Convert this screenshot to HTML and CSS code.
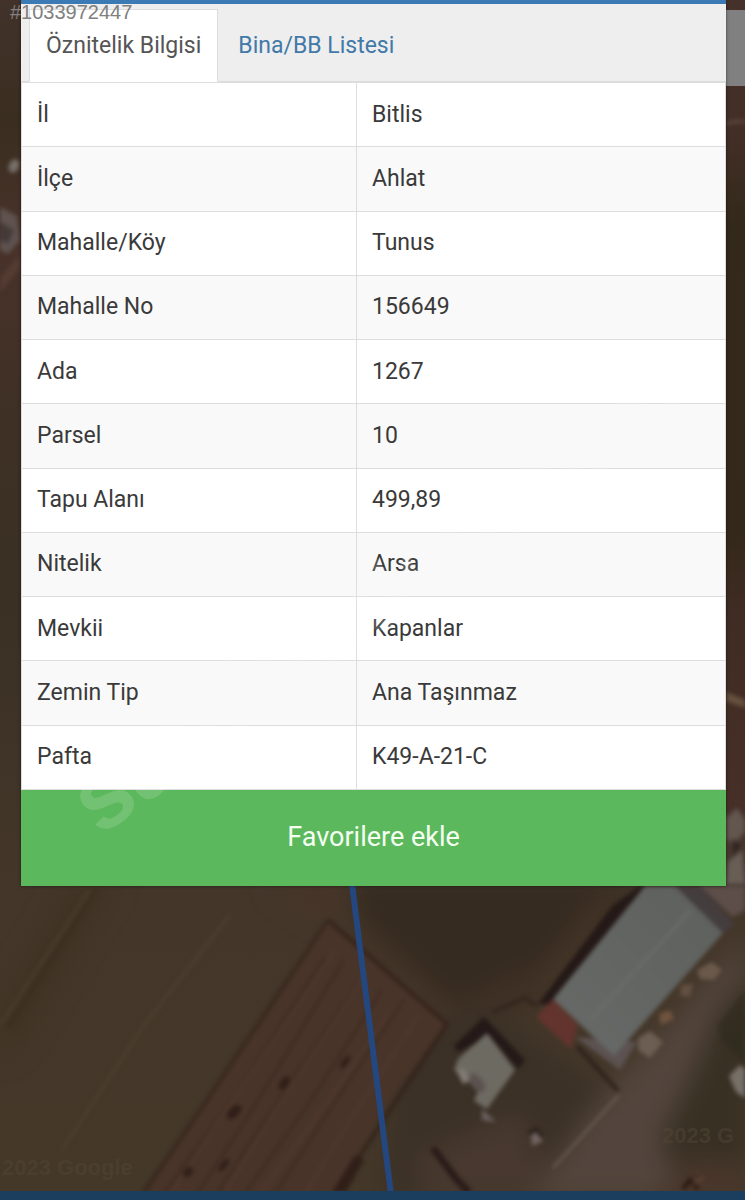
FILE: index.html
```html
<!DOCTYPE html>
<html lang="tr">
<head>
<meta charset="utf-8">
<meta name="viewport" content="width=device-width, initial-scale=1">
<title>Parsel Bilgisi</title>
<link rel="stylesheet" href="styles.css">
</head>
<body>
<div class="page">
  <svg class="map" viewBox="0 0 745 1200" preserveAspectRatio="xMidYMin slice" aria-hidden="true">
    <defs>
      <filter id="soft" color-interpolation-filters="sRGB" x="-20%" y="-20%" width="140%" height="140%"><feGaussianBlur stdDeviation="2"/></filter>
      <filter id="haze" color-interpolation-filters="sRGB" x="-50%" y="-50%" width="200%" height="200%"><feGaussianBlur stdDeviation="13"/></filter>
      <linearGradient id="left" x1="0" y1="0" x2="0" y2="1">
        <stop offset="0" stop-color="#42322a"/><stop offset=".1" stop-color="#3a2e20"/>
        <stop offset=".2" stop-color="#49322a"/><stop offset=".35" stop-color="#3e3024"/>
        <stop offset=".5" stop-color="#3a3024"/><stop offset=".75" stop-color="#44372a"/>
        <stop offset="1" stop-color="#443829"/>
      </linearGradient>
      <linearGradient id="right" x1="0" y1="0" x2="0" y2="1">
        <stop offset="0" stop-color="#46312a"/><stop offset=".15" stop-color="#432e26"/>
        <stop offset=".25" stop-color="#33291b"/><stop offset=".6" stop-color="#34281a"/>
        <stop offset=".7" stop-color="#412c24"/><stop offset=".9" stop-color="#452f27"/>
        <stop offset="1" stop-color="#4a3d35"/>
      </linearGradient>
      <linearGradient id="roof" x1="0" y1="1" x2="1" y2="0">
        <stop offset="0" stop-color="#676a68"/><stop offset="1" stop-color="#5e605d"/>
      </linearGradient>
    </defs>
    <rect width="745" height="1200" fill="url(#left)"/>
    <rect x="700" width="45" height="890" fill="url(#right)"/>

    <g filter="url(#soft)">
      <ellipse cx="14" cy="166" rx="5" ry="7" fill="#77716a" transform="rotate(25 14 166)"/>
      <path d="M0 207L17 216L20 240L8 254L0 250Z" fill="#5f5350"/>
      <path d="M0 222L14 230L8 244L0 240Z" fill="#443b39"/>
      <path d="M0 278L20 254V268L0 293Z" fill="#543c32"/>
      <path d="M726 124Q736 120 745 122" fill="none" stroke="#5a443a" stroke-width="4"/>
      <path d="M726 692L745 700V708L726 701Z" fill="#67523f"/>
      <path d="M726 818L737 808L745 820V832L733 845L726 838Z" fill="#62564f"/>
      <path d="M728 862L742 850L745 884H726Z" fill="#685e56"/>
      <path d="M732 838L741 846L734 856Z" fill="#302521"/>
    </g>

    <g filter="url(#haze)">
      <path d="M350 880H640L535 1000L455 1025L365 940Z" fill="#352b20"/>
      <path d="M355 925L450 1015L545 975L610 895" fill="none" stroke="#453327" stroke-width="17"/>
      <path d="M400 1040L480 1000L620 1100L550 1200H380Z" fill="#3b3126"/>
      <path d="M410 1160L520 1110L560 1200H430Z" fill="#48382f"/>
      <path d="M745 940L680 1015L590 1110L530 1200H665L695 1080L745 1000Z" fill="#53453d"/>
      <path d="M745 975L715 1020L690 1080L660 1140L680 1180L745 1170Z" fill="#383023"/>
      <path d="M655 1200L690 1160L745 1165V1200Z" fill="#4b372c"/>
      <path d="M75 880L115 880L20 1040L0 1060V1010Z" fill="#403223"/>
      <path d="M270 885H350L325 920Z" fill="#493329"/>
    </g>

    <g filter="url(#soft)">
      <path d="M90 890L0 1025" fill="none" stroke="#4a3d2d" stroke-width="3"/>
      <path d="M96 890L8 1027" fill="none" stroke="#3c2e21" stroke-width="5"/>
      <path d="M230 915L142 1028L62 1150" fill="none" stroke="#4d3f2f" stroke-width="3"/>
      <path d="M328 920L447 1024L390 1098L335 1192H142L207 1099Z" fill="#493429"/>
      <path d="M328 920L447 1024L336 1192" fill="none" stroke="#35231b" stroke-width="4"/>
      <path d="M328 920L207 1100L144 1192" fill="none" stroke="#38281e" stroke-width="4"/>
      <g fill="none" stroke="#402c23" stroke-width="3">
        <path d="M325 957L238 1090L165 1192"/><path d="M344 960L252 1110L198 1192"/>
        <path d="M358 983L285 1090L218 1192"/><path d="M382 990L311 1100L246 1192"/>
        <path d="M404 1000L333 1105L276 1192"/>
      </g>
      <g fill="none" stroke="#50392e" stroke-width="3">
        <path d="M335 950L220 1118L172 1192"/><path d="M367 972L275 1110L225 1192"/>
        <path d="M391 1011L316 1118L261 1192"/><path d="M419 1015L350 1120L306 1192"/>
      </g>
      <g fill="#301f18">
        <ellipse cx="284" cy="1083" rx="4" ry="8" transform="rotate(35 284 1083)"/>
        <ellipse cx="234" cy="1112" rx="5" ry="9" transform="rotate(45 234 1112)"/>
        <ellipse cx="345" cy="1062" rx="3" ry="8" transform="rotate(35 345 1062)"/>
        <ellipse cx="224" cy="1165" rx="3" ry="8" transform="rotate(40 224 1165)"/>
        <ellipse cx="188" cy="1172" rx="4" ry="6" transform="rotate(40 188 1172)"/>
        <path d="M332 1192L355 1155L364 1160L346 1192Z"/>
      </g>

      <path d="M640 886L612 906L538 1004L552 1004L648 886Z" fill="#241917"/>
      <path d="M676 886H700L735 924L722 934Z" fill="#443d3e"/>
      <path d="M700 886L733 917L745 910V886Z" fill="#5d4e49"/>
      <path d="M575 1037L620 1070L637 1042Z" fill="#5c5251"/>
      <path d="M645 886H675L723 933L614 1056L553 999Z" fill="url(#roof)"/>
      <path d="M691 910L590 1020" stroke="#6c6f6d" stroke-width="2"/>
      <path d="M553 999L578 1025L571 1049L536 1017Z" fill="#63342e"/>
      <path d="M484 1017L525 1060L518 1069L490 1036L458 1052L454 1046Z" fill="#241918"/>
      <path d="M487 1033L515 1070L487 1109L474 1101L479 1088L454 1070L458 1059Z" fill="#6d6a62"/>
      <ellipse cx="477" cy="1083" rx="11" ry="6" fill="#5c5250" transform="rotate(50 477 1083)"/>
      <path d="M456 1070L465 1069L470 1081L463 1084Z" fill="#817a74"/>
      <path d="M482 1109L496 1122L482 1120Z" fill="#6b6060"/>
      <path d="M493 1012L525 998L537 1006" fill="none" stroke="#2f221b" stroke-width="3"/>
      <path d="M577 1046L618 1091" stroke="#2c201a" stroke-width="4"/>
      <path d="M619 1095L553 1168" stroke="#6d6156" stroke-width="2"/>
      <path d="M433 1148L457 1180L469 1192" fill="none" stroke="#291b18" stroke-width="7"/>
      <path d="M531 1136L537 1131L543 1141L532 1146Z" fill="#6f6460"/>
      <path d="M529 1133L536 1129L542 1137" fill="none" stroke="#251b17" stroke-width="3"/>
      <path d="M697 970L712 962L722 970L714 980L700 979Z" fill="#6b5a4b"/>
      <path d="M681 985L693 984L690 997L680 996Z" fill="#635042"/>
      <path d="M659 1014L670 1010L674 1019L661 1025Z" fill="#70543f"/>
      <path d="M638 1038L650 1031L663 1042L650 1058L638 1050Z" fill="#6c5e52"/>
      <path d="M721 1040L718 1025L745 990V1065Z" fill="#2b281c" opacity=".55"/>
      <path d="M729 1076L740 1065L745 1069V1098L736 1092Z" fill="#777069"/>
      <path d="M683 1189L690 1180L698 1189" fill="none" stroke="#29170f" stroke-width="4"/>
      <path d="M693 1184L704 1177" stroke="#604035" stroke-width="3"/>
    </g>
    <path d="M352 884L391 1194" stroke="#23477e" stroke-width="6"/>
    <text class="map-credit" x="2" y="1175">2023 Google</text>
    <text class="map-credit" x="662" y="1143">2023 G</text>
  </svg>
  <div class="map-control"></div>
  <div class="map-footer"></div>

  <main class="dialog">
    <nav class="tabs">
      <a class="tab active" href="#oznitelik" aria-current="page">Öznitelik Bilgisi</a>
      <a class="tab" href="#bina">Bina/BB Listesi</a>
    </nav>
    <table class="details" id="oznitelik">
      <tbody>
        <tr><th scope="row">İl</th><td>Bitlis</td></tr>
        <tr><th scope="row">İlçe</th><td>Ahlat</td></tr>
        <tr><th scope="row">Mahalle/Köy</th><td>Tunus</td></tr>
        <tr><th scope="row">Mahalle No</th><td>156649</td></tr>
        <tr><th scope="row">Ada</th><td>1267</td></tr>
        <tr><th scope="row">Parsel</th><td>10</td></tr>
        <tr><th scope="row">Tapu Alanı</th><td>499,89</td></tr>
        <tr><th scope="row">Nitelik</th><td>Arsa</td></tr>
        <tr><th scope="row">Mevkii</th><td>Kapanlar</td></tr>
        <tr><th scope="row">Zemin Tip</th><td>Ana Taşınmaz</td></tr>
        <tr><th scope="row">Pafta</th><td>K49-A-21-C</td></tr>
      </tbody>
    </table>
    <button class="favorite" type="button">Favorilere ekle</button>
  </main>

  <svg class="watermark" viewBox="0 0 745 1200" preserveAspectRatio="xMidYMin slice" aria-hidden="true">
    <text class="watermark-text" transform="translate(100 837) rotate(-36)">sahibinden.com</text>
  </svg>
  <div class="listing-id">#1033972447</div>
</div>
</body>
</html>
```
FILE: styles.css
```css
* {
  box-sizing: border-box;
}

body {
  margin: 0;
  font-family: Roboto, "Liberation Sans", sans-serif;
  color: #3a3a3a;
}

.page {
  position: relative;
  min-height: 100vh;
  padding: 0 19px 0 21px;
  overflow: hidden;
  background: #44372a;
}

.map,
.watermark {
  position: absolute;
  inset: 0;
  width: 100%;
  height: 100%;
}

.watermark {
  pointer-events: none;
}

.watermark-text {
  font: bold 96px "Liberation Sans", sans-serif;
  fill: #fff;
  fill-opacity: 0.14;
}

.map-credit {
  font: bold 22px "Liberation Sans", sans-serif;
  fill: #514636;
  fill-opacity: 0.5;
}

.map-control {
  position: absolute;
  top: 10px;
  right: 0;
  width: 40px;
  height: 76px;
  background: #808080;
}

.map-footer {
  position: absolute;
  right: 0;
  bottom: 0;
  left: 0;
  height: 9px;
  background: #1b3e5e;
}

.dialog {
  position: relative;
  border-top: 4px solid #3b7ab5;
  background: #fff;
  box-shadow: 0 0 3px rgba(0, 0, 0, 0.5);
}

.tabs {
  display: flex;
  gap: 3px;
  padding: 5px 8px 0;
  background: #eee;
  border-bottom: 1px solid #ddd;
}

.tab {
  margin-bottom: -1px;
  padding: 20px 16px 19px;
  border: 1px solid transparent;
  font-size: 23px;
  line-height: 32px;
  color: #4279a8;
  text-decoration: none;
}

.tab.active {
  border-color: #ddd;
  border-bottom-color: #fff;
  background: #fff;
  color: #555;
}

.details {
  width: 100%;
  height: 708px;
  border-collapse: collapse;
  table-layout: fixed;
  font-size: 23px;
  line-height: 32px;
}

.details th,
.details td {
  padding: 0 15px;
  border: 1px solid #ddd;
  font-weight: 400;
  text-align: left;
}

.details th {
  width: 335px;
}

.details tr:nth-child(even) {
  background: #f9f9f9;
}

.favorite {
  display: block;
  width: 100%;
  padding: 31px 16px 33px;
  border: 0;
  background: #5cb85c;
  color: #f4fff2;
  font: 27px/32px Roboto, "Liberation Sans", sans-serif;
}

.listing-id {
  position: absolute;
  top: 1px;
  left: 10px;
  font: 20px/22px "Liberation Sans", sans-serif;
  color: #808080;
}
```
